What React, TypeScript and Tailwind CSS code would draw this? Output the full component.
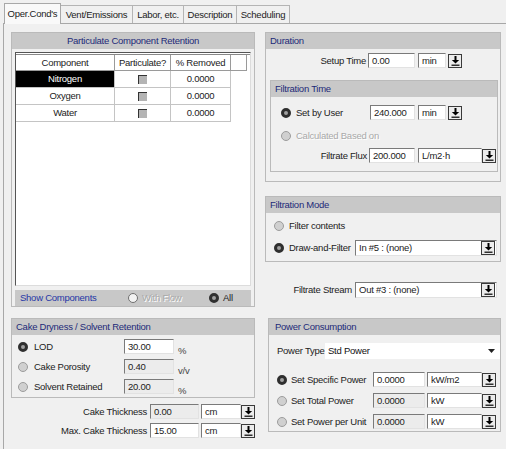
import React from "react";

function Radio({ on, dis }: { on?: boolean; dis?: boolean }) {
  if (on)
    return <span className="inline-block w-[10px] h-[10px] rounded-full border-[3px] border-[#2f2f2f] bg-[#a0a0a0] shrink-0" />;
  if (dis)
    return <span className="inline-block w-[10px] h-[10px] rounded-full border border-[#9c9c9c] bg-[#d0d0d0] shrink-0" />;
  return <span className="inline-block w-[10px] h-[10px] rounded-full border border-[#8c8c8c] bg-[#d6d6d6] shrink-0" />;
}

function Arrow() {
  return (
    <svg width="9" height="10" viewBox="0 0 9 10">
      <rect x="3.5" y="0" width="2" height="4.5" fill="#000" />
      <path d="M0.8 4 L8.2 4 L4.5 7.6 Z" fill="#000" />
      <rect x="0.5" y="8.6" width="8" height="1.2" fill="#000" />
    </svg>
  );
}

function DropBtn() {
  return (
    <span className="w-[14px] h-[14px] shrink-0 border border-[#3a3a3a] bg-[#ececec] flex items-center justify-center">
      <Arrow />
    </span>
  );
}

function Dis({ children }: { children: React.ReactNode }) {
  return <span className="text-[#a9a9a9] [text-shadow:1px_1px_0_#ffffff]">{children}</span>;
}

const fieldBase =
  "h-[15px] shrink-0 border border-t-[#7a7a7a] border-l-[#7a7a7a] border-r-[#e2e2e2] border-b-[#e2e2e2] flex items-center pl-[3px]";

export default function App() {
  return (
    <div className="w-[506px] h-[449px] bg-[#f0f0f0] overflow-hidden flex flex-col font-['Liberation_Sans',Arial,sans-serif] text-[9.5px] tracking-[-0.25px] text-[#222] leading-none">
      {/* tabs */}
      <div className="h-[23px] flex items-end pl-[4px] shrink-0">
        <div className="relative z-10 w-[57px] h-[21px] mb-[-1px] bg-[#f9f9f9] border border-b-0 border-[#a8a8a8] flex items-center justify-center">
          Oper.Cond's
        </div>
        <div className="w-[72px] h-[18px] border border-l-0 border-b-0 border-[#b4b4b4] flex items-center justify-center">
          Vent/Emissions
        </div>
        <div className="w-[51px] h-[18px] border border-l-0 border-b-0 border-[#b4b4b4] flex items-center justify-center">
          Labor, etc.
        </div>
        <div className="w-[53px] h-[18px] border border-l-0 border-b-0 border-[#b4b4b4] flex items-center justify-center">
          Description
        </div>
        <div className="w-[53px] h-[18px] border border-l-0 border-b-0 border-[#b4b4b4] flex items-center justify-center">
          Scheduling
        </div>
      </div>

      {/* page */}
      <div className="flex-1 ml-[3px] border-l border-t border-[#a8a8a8] flex pl-[7px] pt-[8px] gap-[10px]">
        {/* left column */}
        <div className="w-[244px] shrink-0 flex flex-col">
          <div className="h-[275px] border border-[#bababa] flex flex-col">
            <div className="h-[16px] bg-[#c8c8c8] flex items-center justify-center text-[#1d2a78]">
              Particulate Component Retention
            </div>
            <div className="flex-1 px-[3px] pt-[3px] flex flex-col">
              <div className="h-[234px] bg-white border border-t-[#555] border-l-[#555] border-r-[#dcdcdc] border-b-[#dcdcdc] pt-[1px]">
                <div className="flex h-[17px] border-t border-[#888]">
                  <div className="w-[99px] border-r border-b border-[#9a9a9a] flex items-center justify-center">Component</div>
                  <div className="w-[56px] border-r border-b border-[#9a9a9a] flex items-center justify-center">Particulate?</div>
                  <div className="w-[60px] border-r border-b border-[#9a9a9a] flex items-center justify-center">% Removed</div>
                  <div className="w-[16px] border-r border-b border-[#9a9a9a]" />
                </div>
                {[
                  ["Nitrogen", true],
                  ["Oxygen", false],
                  ["Water", false],
                ].map(([n, sel]) => (
                  <div key={n as string} className="flex h-[17px]">
                    <div
                      className={
                        sel
                          ? "w-[99px] bg-black text-white border-r border-b border-[#c4c4c4] flex items-center justify-center"
                          : "w-[99px] border-r border-b border-[#c4c4c4] flex items-center justify-center"
                      }
                    >
                      {n as string}
                    </div>
                    <div className="w-[56px] border-r border-b border-[#c4c4c4] flex items-center justify-center">
                      <span className="w-[9px] h-[9px] bg-[#b4b4b4] border-t border-l border-[#333]" />
                    </div>
                    <div className="w-[60px] border-r border-b border-[#c4c4c4] flex items-center justify-center">0.0000</div>
                  </div>
                ))}
              </div>
              <div className="mt-[4px] h-[16px] bg-[#c8c8c8] flex items-center pl-[5px]">
                <span className="w-[108px] text-[#2536a6]">Show Components</span>
                <span className="w-[81px] flex items-center gap-[4px]">
                  <span className="inline-block w-[10px] h-[10px] rounded-full border border-[#6f6f6f] bg-[#f2f2f2] shrink-0" />
                  <Dis>With Flow</Dis>
                </span>
                <span className="flex items-center gap-[4px]">
                  <Radio on />
                  <span>All</span>
                </span>
              </div>
            </div>
          </div>

          {/* cake dryness */}
          <div className="mt-[11px] h-[80px] border border-[#bababa] flex flex-col">
            <div className="h-[16px] bg-[#c8c8c8] flex items-center pl-[4px] text-[#1d2a78]">
              Cake Dryness / Solvent Retention
            </div>
            <div className="flex flex-col pl-[6px] pt-[4px] gap-[5px]">
              {[
                ["LOD", "30.00", "%", true],
                ["Cake Porosity", "0.40", "v/v", false],
                ["Solvent Retained", "20.00", "%", false],
              ].map(([l, v, u, on]) => (
                <div key={l as string} className="flex items-center h-[15px]">
                  <Radio on={on as boolean} dis={!on} />
                  <span className="ml-[6px] w-[90px]">{l as string}</span>
                  <span className={on ? fieldBase + " w-[50px] bg-white" : fieldBase + " w-[50px] bg-[#ececec]"}>{v as string}</span>
                  <span className="ml-[4px] self-end mb-[-1px] text-[#444]">{u as string}</span>
                </div>
              ))}
            </div>
          </div>

          {/* thickness */}
          <div className="mt-[6px] flex flex-col gap-[4px]">
            {[
              ["Cake Thickness", "0.00", false],
              ["Max. Cake Thickness", "15.00", true],
            ].map(([l, v, w]) => (
              <div key={l as string} className="flex items-center h-[15px]">
                <span className="w-[137px] text-right">{l as string}</span>
                <span className={w ? fieldBase + " ml-[3px] w-[49px] bg-white" : fieldBase + " ml-[3px] w-[49px] bg-[#ececec]"}>{v as string}</span>
                <span className={fieldBase + " ml-[2px] w-[40px] bg-white"}>cm</span>
                <DropBtn />
              </div>
            ))}
          </div>
        </div>

        {/* right column */}
        <div className="w-[236px] shrink-0 flex flex-col">
          {/* duration */}
          <div className="h-[150px] border border-[#bababa] flex flex-col">
            <div className="h-[16px] bg-[#c8c8c8] flex items-center pl-[4px] text-[#1d2a78]">Duration</div>
            <div className="mt-[4px] flex items-center h-[15px]">
              <span className="w-[100px] text-right">Setup Time</span>
              <span className={fieldBase + " ml-[2px] w-[47px] bg-white"}>0.00</span>
              <span className={fieldBase + " ml-[3px] w-[28px] bg-white"}>min</span>
              <span className="ml-[2px]">
                <DropBtn />
              </span>
            </div>
            <div className="mt-[12px] ml-[4px] w-[228px] h-[92px] border border-[#bababa] flex flex-col">
              <div className="h-[16px] bg-[#c8c8c8] flex items-center pl-[4px] text-[#1d2a78]">Filtration Time</div>
              <div className="mt-[8px] flex items-center h-[15px] pl-[10px]">
                <Radio on />
                <span className="ml-[5px] w-[74px]">Set by User</span>
                <span className={fieldBase + " w-[45px] bg-white"}>240.000</span>
                <span className={fieldBase + " ml-[3px] w-[28px] bg-white"}>min</span>
                <span className="ml-[2px]">
                  <DropBtn />
                </span>
              </div>
              <div className="mt-[8px] flex items-center h-[15px] pl-[10px]">
                <Radio dis />
                <span className="ml-[5px]">
                  <Dis>Calculated Based on</Dis>
                </span>
              </div>
              <div className="mt-[5px] flex items-center h-[15px]">
                <span className="w-[96px] text-right">Filtrate Flux</span>
                <span className={fieldBase + " ml-[2px] w-[46px] bg-white"}>200.000</span>
                <span className={fieldBase + " ml-[3px] w-[64px] bg-white"}>L/m2·h</span>
                <DropBtn />
              </div>
            </div>
          </div>

          {/* filtration mode */}
          <div className="mt-[14px] h-[66px] border border-[#bababa] flex flex-col">
            <div className="h-[16px] bg-[#c8c8c8] flex items-center pl-[4px] text-[#1d2a78]">Filtration Mode</div>
            <div className="mt-[6px] flex items-center h-[14px] pl-[8px]">
              <Radio dis />
              <span className="ml-[5px]">Filter contents</span>
            </div>
            <div className="mt-[7px] flex items-center h-[16px] pl-[8px]">
              <Radio on />
              <span className="ml-[5px] w-[66px]">Draw-and-Filter</span>
              <span className="w-[142px] h-[16px] border border-t-[#7a7a7a] border-l-[#7a7a7a] border-r-[#e2e2e2] border-b-[#e2e2e2] bg-white flex items-center justify-between pl-[3px] pr-[1px]">
                <span>In #5 : (none)</span>
                <DropBtn />
              </span>
            </div>
          </div>

          <div className="mt-[20px] flex items-center h-[16px]">
            <span className="w-[87px] text-right">Filtrate Stream</span>
            <span className="ml-[3px] w-[142px] h-[16px] border border-t-[#7a7a7a] border-l-[#7a7a7a] border-r-[#e2e2e2] border-b-[#e2e2e2] bg-white flex items-center justify-between pl-[3px] pr-[1px]">
              <span>Out #3 : (none)</span>
              <DropBtn />
            </span>
          </div>

          {/* power */}
          <div className="mt-[20px] ml-[3px] w-[233px] h-[114px] border border-[#bababa] flex flex-col">
            <div className="h-[16px] bg-[#c8c8c8] flex items-center pl-[6px] text-[#1d2a78]">Power Consumption</div>
            <div className="mt-[8px] flex items-center h-[16px] pl-[8px]">
              <span className="w-[48px]">Power Type</span>
              <span className="flex-1 h-[16px] bg-white flex items-center justify-between pl-[3px] pr-[5px]">
                <span className="text-[#111]">Std Power</span>
                <svg width="7" height="4" viewBox="0 0 7 4">
                  <path d="M0 0H7L3.5 4Z" fill="#222" />
                </svg>
              </span>
            </div>
            <div className="mt-[13px] flex flex-col gap-[6px]">
              {[
                ["Set Specific Power", "kW/m2", true],
                ["Set Total Power", "kW", false],
                ["Set Power per Unit", "kW", false],
              ].map(([l, u, on]) => (
                <div key={l as string} className="flex items-center h-[15px] pl-[8px]">
                  <Radio on={on as boolean} dis={!on} />
                  <span className="ml-[4px] w-[82px]">{l as string}</span>
                  <span className={on ? fieldBase + " w-[52px] bg-white" : fieldBase + " w-[52px] bg-[#ececec]"}>0.0000</span>
                  <span className={fieldBase + " ml-[2px] w-[55px] bg-white"}>{u as string}</span>
                  <DropBtn />
                </div>
              ))}
            </div>
          </div>
        </div>
      </div>
    </div>
  );
}
